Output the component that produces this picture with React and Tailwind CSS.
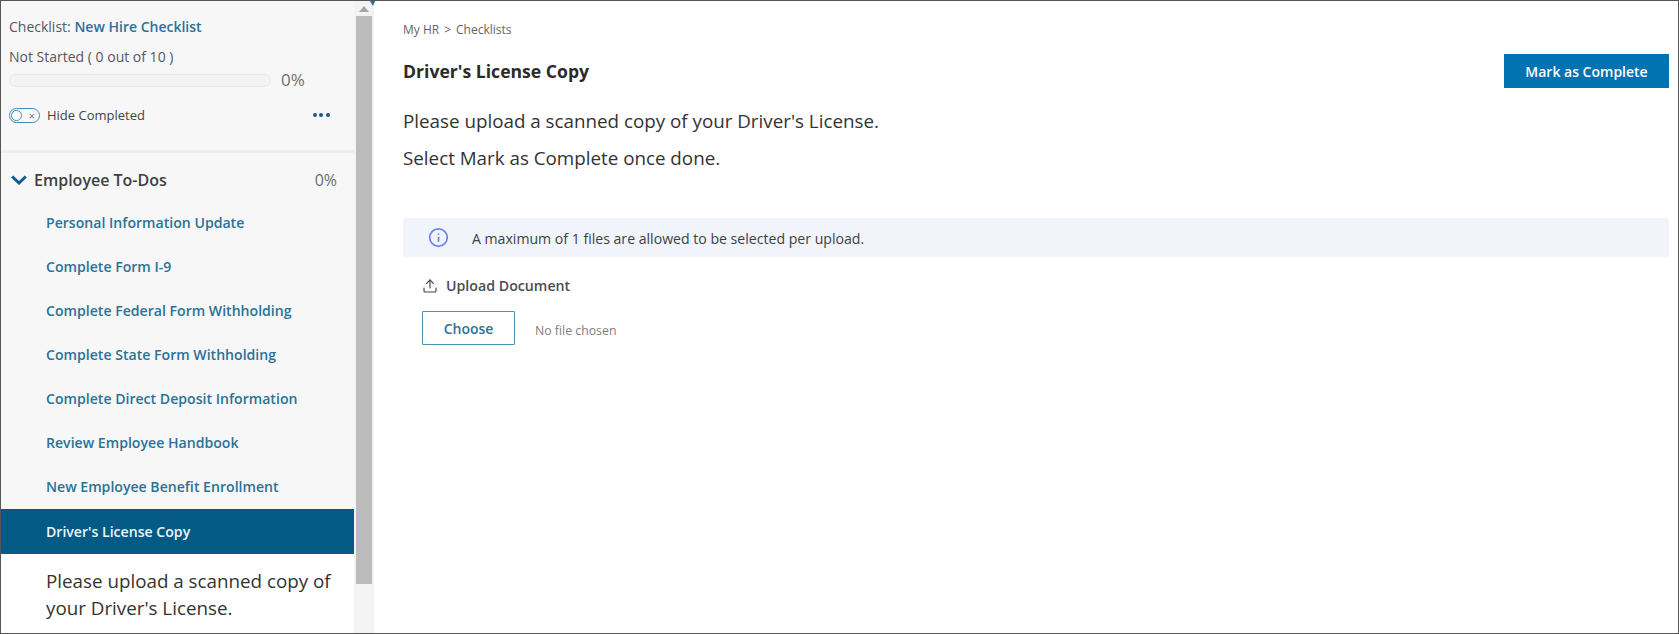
import React from 'react';
import { Info, Upload } from 'lucide-react';

const todos = [
  'Personal Information Update',
  'Complete Form I-9',
  'Complete Federal Form Withholding',
  'Complete State Form Withholding',
  'Complete Direct Deposit Information',
  'Review Employee Handbook',
  'New Employee Benefit Enrollment',
];

const Sidebar = () => (
  <aside className="w-[353px] shrink-0 h-full overflow-hidden bg-[#f7f7f8] flex flex-col">
    <div className="pl-[8px] pt-[16px]">
      <p className="text-[14px] leading-[20px] text-[#55595c]">
        Checklist: <span className="font-semibold text-[#2b7296]">New Hire Checklist</span>
      </p>
      <p className="mt-[10px] text-[14px] leading-[20px] text-[#55595c]">Not Started ( 0 out of 10 )</p>
      <div className="mt-[2px] flex items-center">
        <div className="w-[262px] h-[13px] mt-[1px] rounded-full bg-[#f3f3f3] border border-[#e9e9e9]" />
        <span className="ml-[10px] text-[17px] leading-[22px] text-[#6b6f72]">0%</span>
      </div>
      <div className="mt-[14px] flex items-center">
        <div className="w-[31px] h-[15px] rounded-full border-[1.5px] border-[#3f8fb5] flex items-center justify-between pl-[1px] pr-[4px]">
          <span className="w-[11px] h-[11px] shrink-0 rounded-full border border-[#3f8fb5] bg-white" />
          <span className="text-[11px] leading-none text-[#777]">×</span>
        </div>
        <span className="ml-[7px] text-[13px] leading-[20px] text-[#444]">Hide Completed</span>
        <div className="ml-[168px] flex gap-[2.5px]">
          <span className="w-[4px] h-[4px] rounded-full bg-[#0f5e8c]" />
          <span className="w-[4px] h-[4px] rounded-full bg-[#0f5e8c]" />
          <span className="w-[4px] h-[4px] rounded-full bg-[#0f5e8c]" />
        </div>
      </div>
    </div>
    <div className="mt-[25px] h-[3px] bg-[#eeeeee]" />
    <div className="mt-[14px] pl-[10px] pr-[17px] h-[26px] flex items-center justify-between">
      <div className="flex items-center">
        <svg width="16" height="10" viewBox="0 0 16 10" fill="none" stroke="#0f5e8c" strokeWidth="3" className="shrink-0">
          <path d="M1.2 1.5 L8 8 L14.8 1.5" />
        </svg>
        <span className="ml-[7px] text-[16px] font-semibold text-[#3d4144]">Employee To-Dos</span>
      </div>
      <span className="text-[16px] text-[#6b6f72]">0%</span>
    </div>
    <ul className="mt-[8px]">
      {todos.map((t) => (
        <li key={t} className="h-[44px] pl-[45px] flex items-center text-[14.1px] font-semibold text-[#2b7296]">{t}</li>
      ))}
      <li className="h-[45px] pl-[45px] flex items-center text-[14.1px] font-semibold text-[#eef5f9] bg-[#035a85]">Driver's License Copy</li>
    </ul>
    <p className="flex-1 bg-white pl-[45px] pr-[20px] pt-[14px] text-[18.8px] leading-[27px] text-[#333]">
      Please upload a scanned copy of your Driver's License.
    </p>
  </aside>
);

const Scrollbar = () => (
  <div className="w-[20px] shrink-0 h-full bg-[#f3f3f3] flex flex-col items-center">
    <div className="h-[15px] pt-[5px]">
      <div className="w-0 h-0 border-x-[5px] border-x-transparent border-b-[6px] border-b-[#a5a5a5]" />
    </div>
    <div className="w-[16px] h-[568px] bg-[#bcbcbc]" />
  </div>
);

const App = () => (
  <div className="relative w-[1679px] h-[634px] overflow-hidden border border-[#555] flex bg-white font-['Open_Sans',sans-serif]">
    <Sidebar />
    <Scrollbar />
    {/* sliver of the page header peeking in above the scrollbar */}
    <svg width="5" height="5" viewBox="0 0 5 5" className="absolute left-[369px] top-0">
      <path d="M0 0 H5 L3 5 Z" fill="#1f6f96" />
    </svg>
    <main className="flex-1 pl-[29px] pr-[9px] pt-[20px]">
      <p className="flex gap-[5px] text-[12px] leading-[18px] text-[#666]">
        <span>My HR</span>
        <span>&gt;</span>
        <span>Checklists</span>
      </p>
      <div className="mt-[15px] flex items-center justify-between">
        <h1 className="text-[17.6px] leading-[24px] font-bold text-[#2b2b2b]">Driver's License Copy</h1>
        <button className="w-[165px] h-[34px] bg-[#0272b0] text-white text-[14px] font-semibold">Mark as Complete</button>
      </div>
      <p className="mt-[20px] text-[18.8px] leading-[27px] text-[#333]">Please upload a scanned copy of your Driver's License.</p>
      <p className="mt-[10px] text-[18.8px] leading-[27px] text-[#333]">Select Mark as Complete once done.</p>
      <div className="mt-[46px] h-[39px] bg-[#f1f4fb] flex items-center pl-[25px]">
        <Info size={21} strokeWidth={2} className="text-[#6d83e8]" />
        <span className="ml-[23px] mt-[2px] text-[14.1px] text-[#3d4144]">A maximum of 1 files are allowed to be selected per upload.</span>
      </div>
      <div className="mt-[19px] ml-[19px] flex items-center">
        <Upload size={16} strokeWidth={1.75} className="text-[#444]" />
        <span className="ml-[8px] text-[14.2px] leading-[20px] font-semibold text-[#4a4d50]">Upload Document</span>
      </div>
      <div className="mt-[15px] ml-[19px] flex items-center">
        <button className="w-[93px] h-[34px] border border-[#4b93ad] rounded-[1px] text-[14px] font-semibold text-[#2b7296]">Choose</button>
        <span className="ml-[20px] mt-[6px] text-[12.3px] text-[#808080]">No file chosen</span>
      </div>
    </main>
  </div>
);

export default App;
